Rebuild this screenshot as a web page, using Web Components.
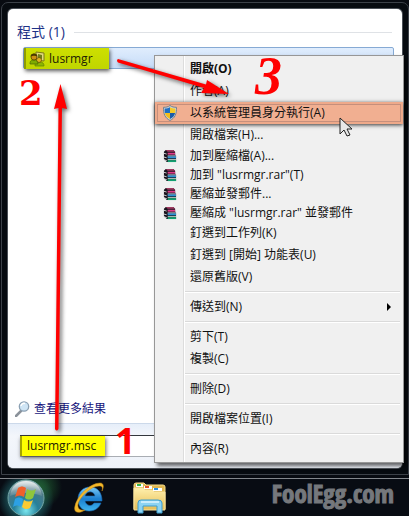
<!DOCTYPE html>
<html lang="zh-Hant">
<head>
<meta charset="utf-8">
<title>lusrmgr</title>
<style>
  html, body { height: 100%; margin: 0; }
  body {
    background: #080b11;
    color: #111;
    font: 12px/22px "Open Sans", "Noto Sans CJK TC", sans-serif;
    overflow: hidden;
  }
</style>
</head>
<body>

<desktop-screen>
  <start-panel heading="程式 (1)" more="查看更多結果" query="lusrmgr.msc">
    <program-item>lusrmgr</program-item>
  </start-panel>

  <context-menu slot="menu">
    <menu-item primary>開啟(O)</menu-item>
    <menu-item>作者(A)</menu-item>
    <menu-item icon="shield" active>以系統管理員身分執行(A)</menu-item>
    <menu-item>開啟檔案(H)...</menu-item>
    <menu-item icon="rar">加到壓縮檔(A)...</menu-item>
    <menu-item icon="rar">加到 "lusrmgr.rar"(T)</menu-item>
    <menu-item icon="rar">壓縮並發郵件...</menu-item>
    <menu-item icon="rar">壓縮成 "lusrmgr.rar" 並發郵件</menu-item>
    <menu-item>釘選到工作列(K)</menu-item>
    <menu-item>釘選到 [開始] 功能表(U)</menu-item>
    <menu-item>還原舊版(V)</menu-item>
    <menu-divider></menu-divider>
    <menu-item submenu>傳送到(N)</menu-item>
    <menu-divider></menu-divider>
    <menu-item>剪下(T)</menu-item>
    <menu-item>複製(C)</menu-item>
    <menu-divider></menu-divider>
    <menu-item>刪除(D)</menu-item>
    <menu-divider></menu-divider>
    <menu-item>開啟檔案位置(I)</menu-item>
    <menu-divider></menu-divider>
    <menu-item>內容(R)</menu-item>
  </context-menu>

  <task-bar slot="taskbar">FoolEgg.com</task-bar>
  <step-marks slot="marks"></step-marks>
</desktop-screen>

<script>
const ICONS = {
  shield: `
    <svg width="14" height="16" viewBox="0 0 14 16">
      <path d="M7 .5C9 2 11 2.3 13.5 2.3 13.7 9 12 13 7 15.5 2 13 .3 9 .5 2.3 3 2.3 5 2 7 .5z" fill="#c9d3dc" stroke="#75808c"/>
      <path d="M7 2.2V8H1.9C1.6 6.5 1.6 5 1.7 3.6 4 3.5 5.5 3 7 2.2z" fill="#1f6fc4"/>
      <path d="M7 2.2V8h5.1c.3-1.5.3-3 .2-4.4C10 3.5 8.5 3 7 2.2z" fill="#f6c927"/>
      <path d="M1.9 8H7v6C4 12.5 2.500 10.5 1.9 8z" fill="#f3bd1c"/>
      <path d="M12.1 8H7v6c3-1.5 4.5-3.5 5.1-6z" fill="#1c5ca8"/>
    </svg>`,
  rar: `
    <svg width="14" height="14" viewBox="0 0 15 15">
      <path d="M1 3l2-2h8l2 2v3l1 1v7H4l-3-3z" fill="#1a141e"/>
      <path d="M3 1h8l2 2H5z" fill="#a23a62"/>
      <path d="M5 4h8v2H5z" fill="#e03a88"/>
      <path d="M1 4l3 1v1L1 5zM1 8l3 1v1L1 9zM1 11l3 1v1l-3-1z" fill="#ddd"/>
      <path d="M5 7h9v1H5z" fill="#eaf6ff"/>
      <path d="M5 8h9v2H5z" fill="#2a92d4"/>
      <path d="M5 11h9v1H5z" fill="#dff5e8"/>
      <path d="M5 12h9v2H5z" fill="#12a070"/>
    </svg>`,
  users: `
    <svg width="16" height="16" viewBox="0 0 16 16">
      <path d="M7 1l8 1v8l-8-1z" fill="#e2d97c" stroke="#7c7a16"/>
      <path d="M9 3l4 1v4l-4-1z" fill="#6f7e18"/>
      <path d="M6 15c0-4 2-4 4-4s5 0 5 4z" fill="#8db600" stroke="#608000" stroke-width=".7"/>
      <circle cx="10" cy="9" r="2.500" fill="#e0b322" stroke="#604900" stroke-width=".7"/>
      <path d="M1 13c0-4 2-4 4-4s4 1 4 4z" fill="#7fac00" stroke="#476600" stroke-width=".7"/>
      <circle cx="5" cy="6" r="3" fill="#cc9013" stroke="#4d3500" stroke-width=".7"/>
      <path d="M1.500 5.500c0-4 7-4 7 0-2-1-5-1-7 0z" fill="#4a3a00"/>
    </svg>`,
  search: `
    <svg width="15" height="16" viewBox="0 0 15 16">
      <path d="M6 10l-5 5" stroke="#8b929a" stroke-width="2.500" stroke-linecap="round"/>
      <circle cx="9" cy="5.500" r="4.700" fill="#cfe5f5" stroke="#8ba0b3" stroke-width="1.300"/>
      <path d="M6 5c0-2 2-3 4-2.500" fill="none" stroke="#fff" stroke-width="1.500"/>
    </svg>`,
  orb: `
    <svg width="38" height="38" viewBox="0 0 38 38">
      <defs>
        <radialGradient id="ball" cx=".5" cy=".85" r=".85">
          <stop offset="0" stop-color="#7ae6ee"/><stop offset=".4" stop-color="#26809a"/>
          <stop offset=".75" stop-color="#4c7886"/><stop offset="1" stop-color="#b5c7c9"/>
        </radialGradient>
        <linearGradient id="gloss" x2="0" y2="1">
          <stop stop-color="#fff" stop-opacity=".75"/><stop offset="1" stop-color="#fff" stop-opacity=".1"/>
        </linearGradient>
      </defs>
      <circle cx="19" cy="19" r="18" fill="url(#ball)" stroke="#72a5a5"/>
      <path d="M3 17C4 7 11 2 19 2s15 5 16 15c-10-4-22-4-32 0z" fill="url(#gloss)"/>
      <path d="M11 9c3-2 5-2 8 0l-2 9c-3-2-6-2-9 0z" fill="#f0602b"/>
      <path d="M20 10c3 2 6 2 9 0l-3 9c-3 2-5 2-8 0z" fill="#8fc63c"/>
      <path d="M8 20c3-2 5-2 8 0l-2 8c-3-2-5-2-8 0z" fill="#2ca0e4"/>
      <path d="M17 21c3 2 6 2 9 0l-3 8c-3 2-6 1-8-1z" fill="#fcca32"/>
    </svg>`,
  browser: `
    <svg width="32" height="32" viewBox="0 0 32 32">
      <defs>
        <linearGradient id="blue" x2="0" y2="1">
          <stop stop-color="#7ccbf8"/><stop offset=".5" stop-color="#1b7fd0"/><stop offset="1" stop-color="#3eb4ee"/>
        </linearGradient>
      </defs>
      <path d="M17 5c8 0 12 6 12 14H12c1 5 7 6 9 2h7c-2 5-6 8-12 8C9 29 5 24 5 17S10 5 17 5zm-5 9h10c-1-5-8-6-10 0z" fill="url(#blue)" stroke="#1768b4" stroke-width=".6"/>
      <path d="M12 28c-6 4-12 3-10-4C4 14 17 1 27 1c4 0 4 4 2 8 1-4 0-5-3-5C18 4 7 15 5 22c-1 5 3 7 7 6z" fill="#f3b92b" stroke="#c98a14" stroke-width=".5"/>
    </svg>`,
  folder: `
    <svg width="34" height="32" viewBox="0 0 34 32">
      <defs>
        <linearGradient id="card" x2="0" y2="1">
          <stop stop-color="#fff0ad"/><stop offset="1" stop-color="#e6bd55"/>
        </linearGradient>
      </defs>
      <path d="M1 3q0-2 2-2h8l2 2h17q2 0 2 2v22H1z" fill="#dfb751" stroke="#f7dc8a"/>
      <path d="M3 2h7v3H3z" fill="#fff"/><path d="M4 2h4v2H4z" fill="#35b64b"/>
      <path d="M11 4h8v3h-8z" fill="#fff"/><path d="M12 4h4v2h-4z" fill="#e5532b"/>
      <path d="M20 6h9v3h-9z" fill="#fff"/><path d="M21 6h4v2h-4z" fill="#2b8fe0"/>
      <path d="M1 6h9l2 2h7l2 2h11v18H1z" fill="url(#card)" stroke="#f9e4a0"/>
      <path d="M5 31V21q0-3 3-3h17q4 0 4 3v10h-5v-7H10v7z" fill="#8dd4f3" stroke="#3c9dce"/>
      <path d="M8 20h18" stroke="#dff6ff" stroke-width="1.500"/>
    </svg>`
};

// Attach an open shadow root filled with the given markup
class Part extends HTMLElement {
  constructor() {
    super();
    this.attachShadow({mode: 'open'});
  }

  connectedCallback() {
    this.shadowRoot.innerHTML = this.render();
  }
}

customElements.define('desktop-screen', class extends Part {
  render() {
    return `
      <style>
      :host {
        display: flex;
        flex-direction: column;
        position: relative;
        min-height: 100%;
      }
      .panel {
        flex: 1;
        display: flex;
        padding: 2px 0 3px 1px;
      }
      ::slotted(start-panel) { flex: 1; }
      ::slotted(context-menu) {
        position: absolute;
        top: 55px;
        left: 154px;
        right: 5px;
      }
      ::slotted(step-marks) {
        position: absolute;
        inset: 0;
      }
      </style>
      <div class="panel"><slot></slot></div>
      <slot name="taskbar"></slot>
      <slot name="menu"></slot>
      <slot name="marks"></slot>
    `;
  }
});

customElements.define('start-panel', class extends Part {
  render() {
    return `
      <style>
      :host {
        display: flex;
        box-sizing: border-box;
        padding: 6px;
        border: 1px solid #3c4148;
        border-radius: 7px 7px 0 0;
        background: #070b10;
      }
      .body {
        flex: 1;
        display: flex;
        flex-direction: column;
        overflow: hidden;
        border-radius: 5px;
        background: #fff;
        box-shadow: 0 0 0 1px #4b5057;
      }
      h2 {
        display: flex;
        align-items: center;
        gap: 9px;
        margin: 12px 10px 4px 9px;
        color: #1e3287;
        font-size: 14px;
        font-weight: normal;
        line-height: 22px;
      }
      h2::after {
        content: "";
        flex: 1;
        border-top: 1px solid #dfe2e6;
      }
      .results { flex: 1; padding: 0 8px 0 15px; }
      .more {
        display: flex;
        align-items: center;
        gap: 4px;
        margin: 0 0 3px 7px;
        color: #15157c;
        text-decoration: none;
      }
      form {
        padding: 11px 12px;
        border-top: 1px solid #ccd9ea;
        background: linear-gradient(#e6eef9, #f3f6fb 12px, #eef2f9);
      }
      .box {
        display: flex;
        height: 20px;
        border: 1px solid #a9adb3;
        border-top-color: #33373d;
        border-left: 0;
        background: #fff;
      }
      input {
        box-sizing: border-box;
        width: 85px;
        padding: 0 0 1px 5px;
        border: 0;
        border-left: 2px solid #a5a500;
        background: #ffff00;
        box-shadow: 1px 2px 4px #0009;
        color: #222200;
        font: 12px "Open Sans", sans-serif;
      }
      </style>
      <div class="body">
        <h2>${this.getAttribute('heading')}</h2>
        <div class="results"><slot></slot></div>
        <a class="more" href="#more">${ICONS.search}<span>${this.getAttribute('more')}</span></a>
        <form>
          <div class="box"><input type="text" aria-label="搜尋" value="${this.getAttribute('query')}"></div>
        </form>
      </div>
    `;
  }
});

customElements.define('program-item', class extends Part {
  render() {
    return `
      <style>
      :host { display: block; }
      button {
        display: flex;
        width: 100%;
        height: 22px;
        padding: 0;
        border: 1px solid #86aad4;
        border-radius: 2px;
        background: linear-gradient(#e0edfd, #c6dcf8);
        color: #222200;
        font: 12px/20px "Open Sans", sans-serif;
      }
      .label {
        display: flex;
        align-items: center;
        gap: 4px;
        box-sizing: border-box;
        width: 85px;
        height: 21px;
        padding-left: 3px;
        border-left: 2px solid #8f9c00;
        background: linear-gradient(#cde000, #c0d500);
        box-shadow: 1px 2px 4px #000a;
      }
      </style>
      <button type="button"><span class="label">${ICONS.users}<slot></slot></span></button>
    `;
  }
});

customElements.define('context-menu', class extends Part {
  render() {
    this.setAttribute('role', 'menu');
    return `
      <style>
      :host {
        display: block;
        box-sizing: border-box;
        padding: 2px 0;
        border: 1px solid #979797;
        background: linear-gradient(90deg, #f0f0f0 28px, #dcdcdc 28px, #dcdcdc 29px, #fff 29px, #fff 30px, #f0f0f0 30px);
        box-shadow: 3px 3px 4px #0009;
      }
      </style>
      <slot></slot>
    `;
  }
});

customElements.define('menu-item', class extends Part {
  render() {
    const icon = this.getAttribute('icon');
    return `
      <style>
      :host { display: block; }
      button {
        display: flex;
        align-items: center;
        width: 100%;
        height: 22px;
        padding: 0 11px 0 0;
        border: 0;
        background: none;
        color: inherit;
        font: inherit;
        text-align: left;
        white-space: nowrap;
      }
      .icon {
        display: flex;
        justify-content: center;
        width: 29px;
        margin-right: 6px;
      }
      .text { flex: 1; }
      :host([icon="rar"]) button { height: 19px; }
      :host([primary]) button { font-weight: bold; }
      :host([active]) button {
        background: #f1af91;
        box-shadow: inset 0 0 0 2px #eea98a, inset 0 0 0 3px #c58f7c, 0 1px 4px #000c;
      }
      </style>
      <button type="button" role="menuitem">
        <span class="icon">${icon ? ICONS[icon] : ''}</span>
        <span class="text"><slot></slot></span>
        ${this.hasAttribute('submenu') ? '<svg width="5" height="8"><path d="M0 0l4 4-4 4z"/></svg>' : ''}
      </button>
    `;
  }
});

customElements.define('menu-divider', class extends Part {
  render() {
    return `
      <style>
      :host {
        display: block;
        height: 1px;
        margin: 3px 3px 3px 30px;
        border-top: 1px solid #dadada;
        background: #fff;
      }
      </style>
    `;
  }
});

customElements.define('task-bar', class extends Part {
  render() {
    return `
      <style>
      :host {
        display: flex;
        align-items: center;
        gap: 28px;
        height: 37px;
        padding: 0 15px 0 7px;
        border-top: 1px solid #83878c;
        background:
          radial-gradient(circle at 40px 8px, #1f5a30, #1f5a3000 22px),
          radial-gradient(circle at 26px 20px, #1d5a60 14px, #080c13 28px);
      }
      button {
        display: flex;
        padding: 0;
        border: 0;
        background: none;
      }
      .mark {
        align-self: flex-start;
        margin-left: auto;
        color: #75787c;
        font: bold 25px/28px Impact, "Open Sans Condensed", sans-serif;
        -webkit-text-stroke: 1px #75787c;
      }
      </style>
      <button type="button" aria-label="開始">${ICONS.orb}</button>
      <button type="button" aria-label="Internet Explorer">${ICONS.browser}</button>
      <button type="button" aria-label="檔案總管">${ICONS.folder}</button>
      <span class="mark"><slot></slot></span>
    `;
  }
});

// Red numbers, arrows and the mouse pointer drawn over the desktop
customElements.define('step-marks', class extends Part {
  render() {
    return `
      <style>
      :host { display: block; pointer-events: none; }
      svg { position: absolute; width: 100%; height: 100%; }
      .arrows { fill: #f00; filter: drop-shadow(2px 2px 2px #0009); }
      b {
        position: absolute;
        color: #f00;
        line-height: 1;
      }
      .one { left: 115px; top: 423px; font: bold 36px/36px "Open Sans", sans-serif; }
      .two { left: 19px; top: 76px; font: bold 34px/34px "DejaVu Serif", serif; }
      .three { left: 255px; top: 49px; font: italic bold 54px/54px "Liberation Serif", serif; }
      </style>
      <svg class="arrows">
        <path d="M55 429L58.500 108 54 109 60.500 84 67 109 62 108 58.500 429q-2 3-3.500 0z"/>
        <path d="M118 59L206 84.500 207 80 229 94 201 93 204 88 118 62.500q-2-2 0-3.500z"/>
      </svg>
      <svg>
        <path d="M340 118v16l4-4 3 6 3-1-3-6h5z" fill="#e8e8e8" stroke="#222" stroke-width="1"/>
      </svg>
      <b class="one">1</b>
      <b class="two">2</b>
      <b class="three">3</b>
    `;
  }
});
</script>
</body>
</html>
